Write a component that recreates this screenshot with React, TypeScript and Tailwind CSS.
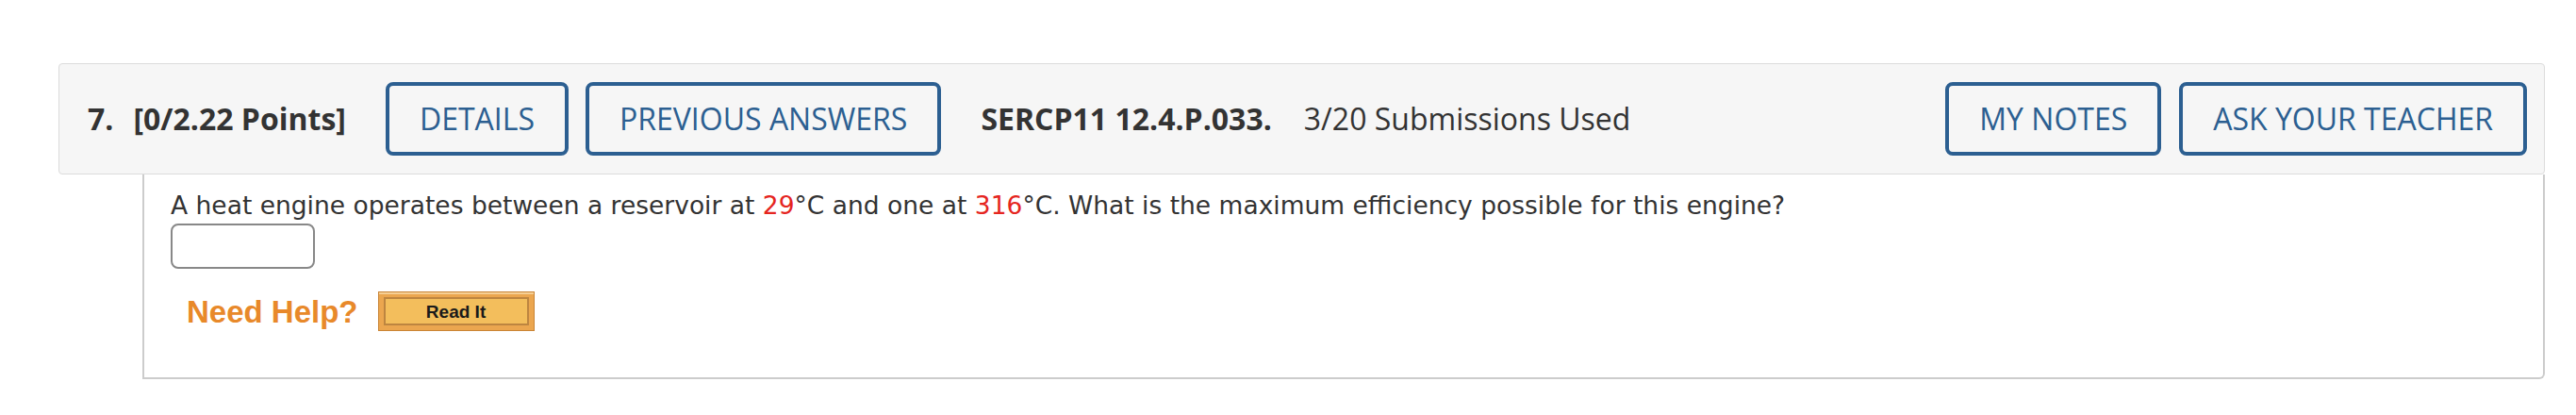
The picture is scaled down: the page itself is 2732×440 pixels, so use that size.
import React from "react";

const blueBtn =
  "h-[78px] px-[32px] border-[4px] border-[#2c5f91] rounded-[8px] text-[#2c5f91] text-[32px] leading-none font-['Open_Sans',sans-serif] bg-transparent flex items-center whitespace-nowrap";

const QuestionHeader: React.FC = () => (
  <div className="flex items-center h-[118px] bg-[#f6f6f6] border border-[#dcdcdc] rounded-[4px] pl-[30px] pr-[18px] font-['Open_Sans',sans-serif] text-[#333]">
    <span className="text-[32px] font-bold leading-none">7.</span>
    <span className="text-[32px] font-bold leading-none ml-[21px]">[0/2.22 Points]</span>
    <button className={`${blueBtn} ml-[42px]`}>DETAILS</button>
    <button className={`${blueBtn} ml-[18px]`}>PREVIOUS ANSWERS</button>
    <span className="text-[32px] font-bold leading-none ml-[42px] whitespace-nowrap">SERCP11 12.4.P.033.</span>
    <span className="text-[32px] leading-none ml-[34px] whitespace-nowrap">3/20 Submissions Used</span>
    <div className="ml-auto flex items-center gap-[19px]">
      <button className={blueBtn}>MY NOTES</button>
      <button className={blueBtn}>ASK YOUR TEACHER</button>
    </div>
  </div>
);

const ReadItButton: React.FC = () => (
  <button className="w-[166px] h-[42px] bg-[#eba64f] border border-[#c98536] p-[5px] shadow-[inset_0_2px_0_#f6cf94]">
    <span className="flex items-center justify-center w-full h-full bg-[#f3be5c] border-[2px] border-[#bd8540] font-['Liberation_Sans',Arial,sans-serif] font-bold text-[19px] text-[#1a1a1a] leading-none">
      Read It
    </span>
  </button>
);

const QuestionBody: React.FC = () => (
  <div className="ml-[89px] border-x-[2px] border-b-[2px] border-[#cccccc] rounded-br-[6px] pl-[28px] pt-[17px] pb-[49px] font-['DejaVu_Sans',Verdana,sans-serif] text-[#333]">
    <p className="text-[26.5px] leading-[31px] whitespace-nowrap">
      A heat engine operates between a reservoir at <span className="text-[#e5261f]">29</span>°C and one at{" "}
      <span className="text-[#e5261f]">316</span>°C. What is the maximum efficiency possible for this engine?
    </p>
    <input
      type="text"
      className="block mt-[4px] w-[153px] h-[48px] border-[2px] border-[#888] rounded-[8px] bg-white"
    />
    <div className="flex items-center mt-[24px] ml-[17px]">
      <span className="font-['Liberation_Sans',Arial,sans-serif] font-bold text-[33px] leading-none text-[#e8892a]">
        Need Help?
      </span>
      <div className="ml-[21px]">
        <ReadItButton />
      </div>
    </div>
  </div>
);

export default function App() {
  return (
    <div className="w-[2732px] h-[440px] bg-white pt-[67px] pl-[62px] pr-[33px]">
      <QuestionHeader />
      <QuestionBody />
    </div>
  );
}
